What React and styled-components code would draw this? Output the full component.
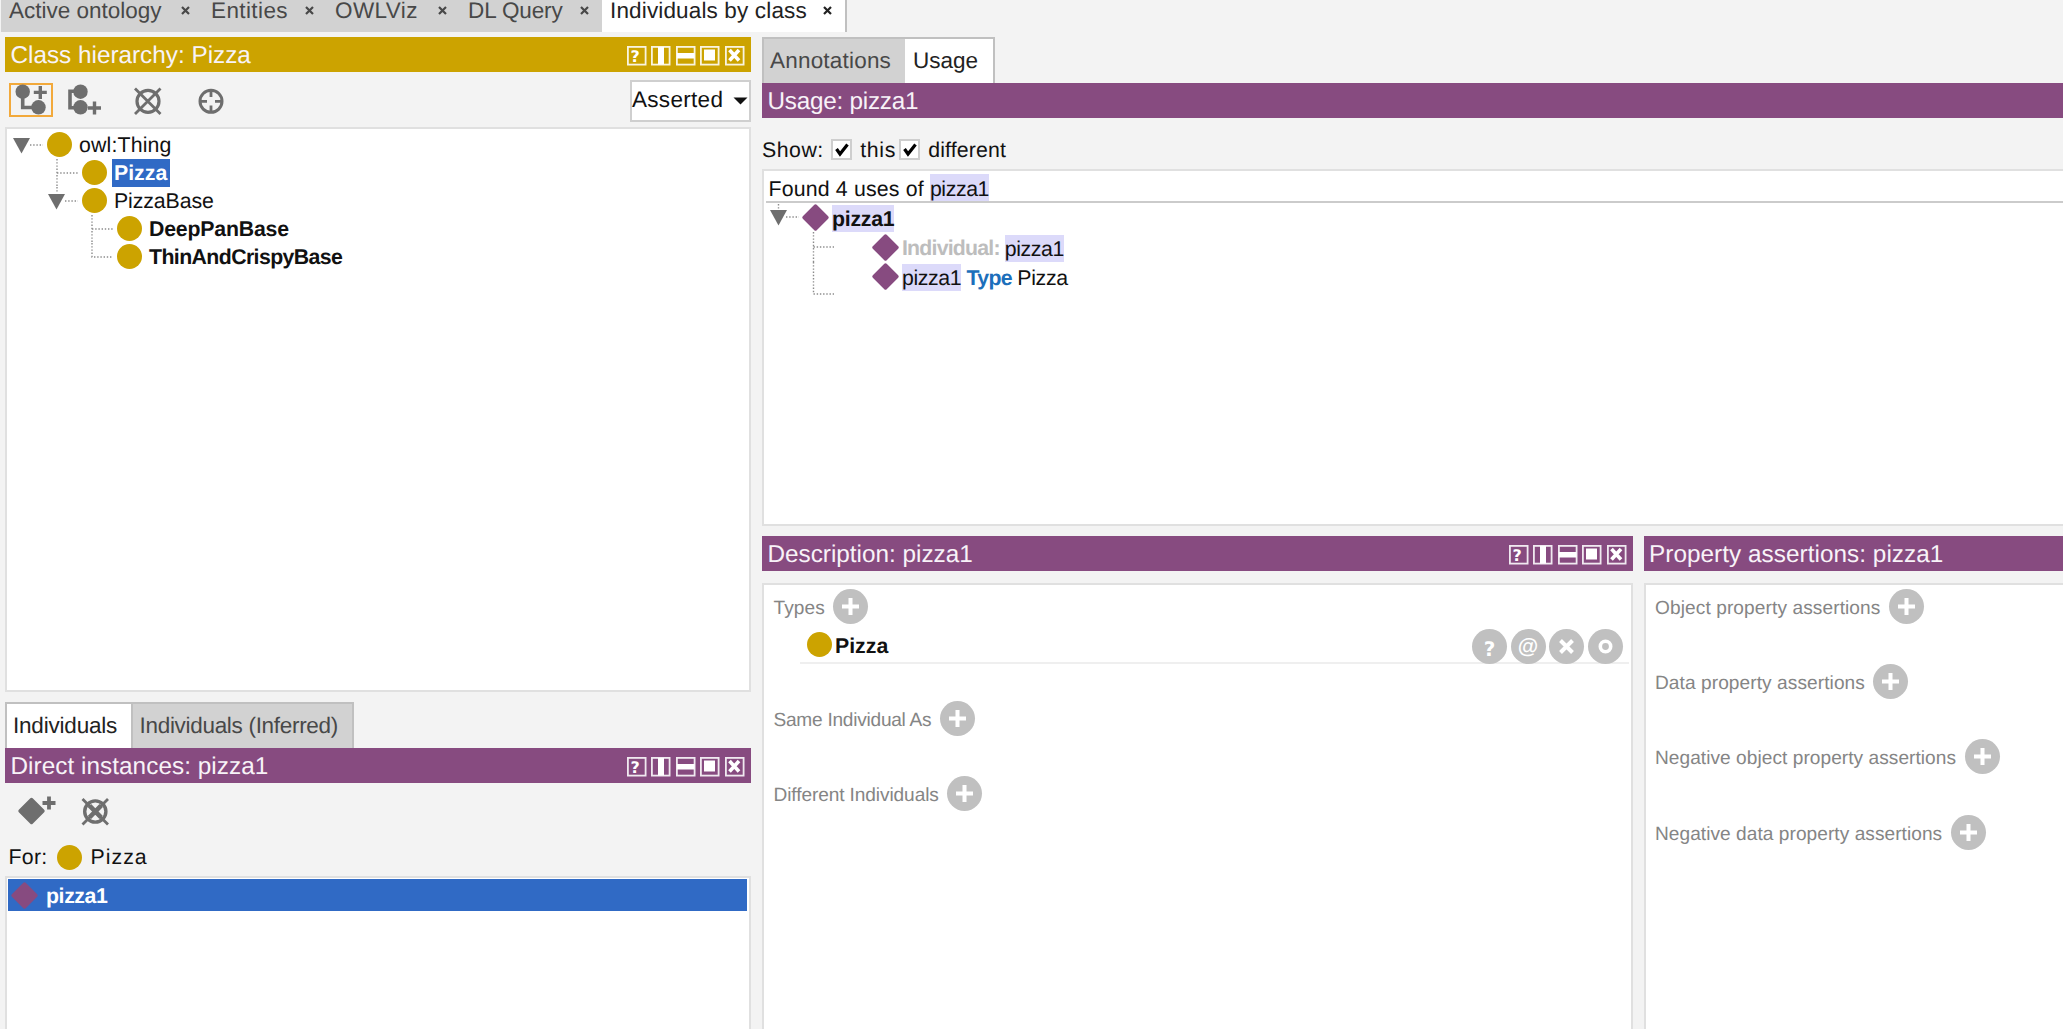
import React from "react";
import styled, { createGlobalStyle } from "styled-components";

const GOLD = "#cca300";
const PURPLE = "#874b80";
const ICON = "#6e6e6e";

const GlobalStyle = createGlobalStyle`
  * { box-sizing: border-box; }
  body {
    margin: 0;
    background: #f3f3f3;
    overflow: hidden;
  }
`;

const Page = styled.div`
  width: 100vw;
  height: 100vh;
  overflow: hidden;
  display: flex;
  flex-direction: column;
  background: #f3f3f3;
  color: #111;
  font-family: "Liberation Sans", Arial, sans-serif;
  font-size: 21.3px;
  text-rendering: geometricPrecision;
  white-space: pre;

  svg {
    display: block;
    flex: none;
    overflow: visible;
  }
`;

const Text = styled.span`
  letter-spacing: ${(p) => p.$ls || 0}px;
  font-weight: ${(p) => (p.$bold ? "bold" : "normal")};
  color: ${(p) => p.$color || "inherit"};
`;

const TopTabs = styled.div`
  display: flex;
  height: 32px;
  flex: none;
  padding-left: 1px;
`;

const TopTab = styled.div`
  width: ${(p) => p.$w}px;
  display: flex;
  justify-content: space-between;
  padding: 0 13px 0 8px;
  background: ${(p) => (p.$active ? "#fff" : "#d2d2d2")};
  color: ${(p) => (p.$active ? "#222" : "#484848")};
  border-right: ${(p) => (p.$active ? "2px solid #c0c0c0" : "none")};
  font-size: 22.5px;
  line-height: 21px;

  svg {
    margin-top: 6px;
  }
`;

const Columns = styled.div`
  display: flex;
  flex: 1;
  gap: 11px;
  padding: 5px 0 0 5px;
  min-height: 0;
`;

const LeftColumn = styled.div`
  width: 746px;
  flex: none;
  display: flex;
  flex-direction: column;
`;

const RightColumn = styled.div`
  flex: 1;
  min-width: 0;
  display: flex;
  flex-direction: column;
`;

const TitleBar = styled.div`
  height: 35px;
  flex: none;
  display: flex;
  align-items: center;
  justify-content: space-between;
  padding: 2px 7px 0 5.5px;
  background: ${(p) => p.$bg || PURPLE};
  color: #f8f3f8;
  font-size: 24.3px;
`;

const HeaderButtons = styled.div`
  display: flex;
  gap: 5px;
  margin-top: 1px;
`;

const Toolbar = styled.div`
  height: 55px;
  flex: none;
  display: flex;
  align-items: flex-start;
  padding: 8px 0 0 4px;
`;

const ToolButton = styled.div`
  width: ${(p) => p.$w}px;
  height: 34px;
  margin: 3px ${(p) => p.$gap || 0}px 0 0;
  border: 2px solid ${(p) => (p.$focus ? "#f2a93b" : "transparent")};
`;

const Combo = styled.div`
  width: 121px;
  height: 42px;
  margin-left: auto;
  padding: 0 1px 2px 0;
  display: flex;
  align-items: center;
  justify-content: space-between;
  background: #fff;
  border: 2px solid #cfcfcf;
  font-size: 22.5px;
`;

const Box = styled.div`
  background: #fff;
  border: 2px solid #e0e0e0;
  flex: ${(p) => (p.$h ? "none" : 1)};
  height: ${(p) => (p.$h ? p.$h + "px" : "auto")};
  padding-top: ${(p) => p.$top || 0}px;
  margin-right: ${(p) => p.$mr || 0}px;
  margin-bottom: ${(p) => (p.$h ? 0 : -4)}px;
`;

const TreeRow = styled.div`
  height: 28px;
  display: flex;
  align-items: center;
`;

const TreeLabel = styled.div`
  height: 28px;
  line-height: 29px;
  margin-left: 5px;
  padding: 0 3px 0 2px;
  background: ${(p) => (p.$selected ? "#306ac5" : "none")};
  color: ${(p) => (p.$selected ? "#fff" : "inherit")};
`;

const Dot = styled.div`
  width: 25px;
  height: 25px;
  flex: none;
  margin-bottom: 1px;
  border-radius: 50%;
  background: ${GOLD};
`;

const SubTabs = styled.div`
  display: flex;
  flex: none;
  height: 46px;
  margin-top: ${(p) => p.$mt || 0}px;
`;

const SubTab = styled.div`
  width: ${(p) => p.$w}px;
  padding-left: ${(p) => p.$pl}px;
  line-height: 44px;
  font-size: 22.5px;
  background: ${(p) => (p.$active ? "#fff" : "#d2d2d2")};
  color: ${(p) => (p.$active ? "#222" : "#484848")};
  border: solid #c0c0c0;
  border-width: 2px ${(p) => (p.$last ? 2 : 0)}px 0 ${(p) => p.$left || 0}px;
`;

const ForRow = styled.div`
  height: 38px;
  flex: none;
  display: flex;
  align-items: center;
  gap: 9px;
  padding: 1px 0 0 3.5px;
`;

const InstanceRow = styled.div`
  height: 32px;
  margin: 0 2px 0 1px;
  display: flex;
  align-items: center;
  gap: 8px;
  padding-left: 3px;
  background: #306ac5;
  color: #fff;

  span {
    padding-top: 2px;
  }
`;

const ShowRow = styled.div`
  height: 51px;
  flex: none;
  display: flex;
  align-items: center;
  padding-top: 12px;

  span {
    padding-top: 2px;
  }
`;

const Check = styled.div`
  width: 21px;
  height: 21px;
  margin: 0 ${(p) => p.$mr}px 0 ${(p) => p.$ml}px;
  border: 2px solid #cecece;
  background: #fff;
`;

const Found = styled.div`
  height: 32px;
  margin-left: 2px;
  padding: 3px 0 0 2.5px;
  line-height: 31px;
  border-bottom: 2px solid #cbcbcb;
`;

const Mark = styled.span`
  display: inline-block;
  height: 27px;
  line-height: ${(p) => (p.$found ? 30 : 28)}px;
  background: #dcdafa;
  vertical-align: top;
`;

const UsageRow = styled.div`
  height: 29.7px;
  display: flex;
  align-items: center;
  line-height: 28px;
  padding-top: 1px;

  svg.diamond {
    margin: 0 3px 2px 0;
  }
`;

const LowerPanels = styled.div`
  display: flex;
  flex: 1;
  gap: 10.5px;
  margin-top: 10px;
`;

const Panel = styled.div`
  width: ${(p) => (p.$w ? p.$w + "px" : "auto")};
  flex: ${(p) => (p.$w ? "none" : 1)};
  display: flex;
  flex-direction: column;
  gap: 12px;
`;

const Section = styled.div`
  height: ${(p) => p.$h || 75.2}px;
  padding-left: 9.5px;
`;

const SectionHead = styled.div`
  height: 35px;
  display: flex;
  align-items: center;
  gap: 8.5px;
  font-size: 19.1px;
  color: #858585;

  span {
    padding-top: 5px;
  }
`;

const TypeRow = styled.div`
  height: 36px;
  margin: 4px 2px 0 26.5px;
  padding-left: 6.5px;
  display: flex;
  align-items: center;
  border-bottom: 2px solid #efefef;
`;

const TypeName = styled.div`
  margin: 0 auto 0 3.5px;
  padding-top: 2px;
  font-weight: bold;
`;

const RoundButtons = styled.div`
  display: flex;
  gap: 3.6px;
  margin: 2px 6.3px 0 0;
`;

const Close = () => (
  <svg width="9" height="9" viewBox="0 0 9 9">
    <path d="M1 1L8 8M8 1L1 8" stroke="currentColor" strokeWidth="2.2" />
  </svg>
);

const Plus = ({ x, y, r = 6.5, w = 3.4 }) => (
  <path
    d={`M${x - r} ${y}H${x + r}M${x} ${y - r}V${y + r}`}
    stroke={ICON}
    strokeWidth={w}
    fill="none"
  />
);

const glyphs = {
  help: (
    <text x="8.2" y="15.5" fontSize="16" fontWeight="bold" fill="#fff" textAnchor="middle" fontFamily="DejaVu Sans">
      ?
    </text>
  ),
  cols: <rect x="7" y="1" width="6" height="17.5" fill="#fff" />,
  rows: <rect x="1" y="7" width="17.5" height="5.5" fill="#fff" />,
  full: <rect x="4" y="3.5" width="11" height="11" fill="#fff" />,
  close: <path d="M4.5 4L14 14.5M14 4L4.5 14.5" stroke="#fff" strokeWidth="3.6" />,
};

const ViewButtons = () => (
  <HeaderButtons>
    {Object.keys(glyphs).map((name) => (
      <svg key={name} width="19.5" height="19.5" viewBox="0 0 19.5 19.5">
        <rect x="0.9" y="0.9" width="17.7" height="17.7" fill="none" stroke="#fff" strokeOpacity="0.88" strokeWidth="1.8" />
        {glyphs[name]}
      </svg>
    ))}
  </HeaderButtons>
);

const Diamond = () => (
  <svg className="diamond" width="27" height="27" viewBox="0 0 27 27">
    <path d="M13.5 2L25 13.5L13.5 25L2 13.5Z" fill={PURPLE} stroke={PURPLE} strokeWidth="3.4" strokeLinejoin="round" />
  </svg>
);

// dotted guide lines and expander in front of a tree row
const Gutter = ({ w, lines, arrow }) => (
  <svg width={w} height="28">
    <path d={lines} stroke="#8c8c8c" strokeWidth="1.4" strokeDasharray="1.4 1.8" fill="none" />
    {arrow && <path d={`M${arrow[0]} ${arrow[1]}h17l-8.5 15.5z`} fill={ICON} />}
  </svg>
);

const signs = {
  plus: <path d="M9 17.5H26M17.5 9V26" stroke="#fff" strokeWidth="4" />,
  help: (
    <text x="17.5" y="27" fontSize="20" fontWeight="bold" fill="#fff" textAnchor="middle" fontFamily="DejaVu Sans">
      ?
    </text>
  ),
  at: (
    <text x="17" y="24" fontSize="21" fontWeight="bold" fill="#fff" textAnchor="middle">
      @
    </text>
  ),
  cross: <path d="M11.5 11.5L23.5 23.5M23.5 11.5L11.5 23.5" stroke="#fff" strokeWidth="4" />,
  ring: <circle cx="17.5" cy="17.5" r="5.2" stroke="#fff" strokeWidth="3.6" fill="none" />,
};

const RoundIcon = ({ sign }) => (
  <svg width="35" height="35" viewBox="0 0 35 35">
    <circle cx="17.5" cy="17.5" r="17.5" fill="#c0c0c0" />
    {signs[sign]}
  </svg>
);

const Tick = () => (
  <svg width="17" height="17" viewBox="0 0 17 17">
    <path d="M3.5 8L7 13L14.5 3.5" stroke="#000" strokeWidth="3.2" fill="none" />
  </svg>
);

const topTabs = [
  { label: "Active ontology", w: 202, ls: 0 },
  { label: "Entities", w: 124, ls: 0.4 },
  { label: "OWLViz", w: 133, ls: 0.4 },
  { label: "DL Query", w: 142, ls: -0.1 },
  { label: "Individuals by class", w: 245, ls: 0.15, active: true },
];

const treeRows = [
  { label: "owl:Thing", w: 40, ls: 0.15, lines: "M23 14H36", arrow: [6, 7] },
  { label: "Pizza", w: 75, bold: true, selected: true, lines: "M50 0V28M50 14H71" },
  { label: "PizzaBase", w: 75, ls: -0.1, lines: "M50 0V6M58 14H71", arrow: [41, 7] },
  { label: "DeepPanBase", w: 110, ls: -0.2, bold: true, lines: "M85 0V28M85 14H106" },
  { label: "ThinAndCrispyBase", w: 110, ls: -0.6, bold: true, lines: "M85 0V14H106" },
];

const assertions = [
  { label: "Object property assertions", ls: 0.1 },
  { label: "Data property assertions", ls: 0.08 },
  { label: "Negative object property assertions", ls: 0.05 },
  { label: "Negative data property assertions", ls: 0.05 },
];

const Head = ({ label, ls }) => (
  <SectionHead>
    <Text $ls={ls}>{label}</Text>
    <RoundIcon sign="plus" />
  </SectionHead>
);

const ClassHierarchy = () => (
  <>
    <TitleBar $bg={GOLD}>
      <Text>Class hierarchy: Pizza</Text>
      <ViewButtons />
    </TitleBar>
    <Toolbar>
      <ToolButton $w={44} $gap={13} $focus>
        <svg width="40" height="30" viewBox="11 85 40 30">
          <circle cx="22.7" cy="91.7" r="7.2" fill={ICON} />
          <circle cx="38.5" cy="107.3" r="7.2" fill={ICON} />
          <path d="M22.7 92V107.5H38" stroke={ICON} strokeWidth="3.6" fill="none" />
          <Plus x={40.3} y={92.4} />
        </svg>
      </ToolButton>
      <ToolButton $w={40} $gap={27}>
        <svg width="36" height="30" viewBox="68 85 36 30">
          <circle cx="80.5" cy="91.7" r="7.2" fill={ICON} />
          <circle cx="80.5" cy="107.3" r="7.2" fill={ICON} />
          <path d="M80 91.2H70V107.7H80" stroke={ICON} strokeWidth="3.6" fill="none" />
          <Plus x={94.5} y={108} />
        </svg>
      </ToolButton>
      <ToolButton $w={34} $gap={29}>
        <svg width="30" height="30" viewBox="135 85 30 30">
          <circle cx="148" cy="101.3" r="11" stroke={ICON} strokeWidth="3.2" fill="none" />
          <path d="M135 88.5L160.5 114M160.5 88.5L135 114" stroke={ICON} strokeWidth="2.8" />
        </svg>
      </ToolButton>
      <ToolButton $w={34}>
        <svg width="30" height="30" viewBox="198 85 30 30">
          <circle cx="211" cy="101.3" r="11" stroke={ICON} strokeWidth="3" fill="none" />
          <path d="M211 90V97M211 105.5V112.5M200 101.3H207M215 101.3H222" stroke={ICON} strokeWidth="2.8" />
        </svg>
      </ToolButton>
      <Combo>
        <Text $ls={0.3}>Asserted</Text>
        <svg width="15" height="9">
          <path d="M0.5 1.5H14.5L7.5 8.5Z" fill="#111" />
        </svg>
      </Combo>
    </Toolbar>
    <Box $h={565} $top={2}>
      {treeRows.map((r) => (
        <TreeRow key={r.label}>
          <Gutter w={r.w} lines={r.lines} arrow={r.arrow} />
          <Dot />
          <TreeLabel $selected={r.selected}>
            <Text $bold={r.bold} $ls={r.ls}>{r.label}</Text>
          </TreeLabel>
        </TreeRow>
      ))}
    </Box>
  </>
);

const Instances = () => (
  <>
    <SubTabs $mt={10}>
      <SubTab $w={126} $pl={6} $left={2} $active>
        <Text $ls={-0.2}>Individuals</Text>
      </SubTab>
      <SubTab $w={223} $pl={6.5} $left={2} $last>
        <Text $ls={-0.3}>Individuals (Inferred)</Text>
      </SubTab>
    </SubTabs>
    <TitleBar>
      <Text $ls={0.05}>Direct instances: pizza1</Text>
      <ViewButtons />
    </TitleBar>
    <Toolbar>
      <ToolButton $w={44} $gap={26}>
        <svg width="40" height="30" viewBox="11 796 40 30">
          <path d="M31.5 799.5L43 811L31.5 822.5L20 811Z" fill={ICON} stroke={ICON} strokeWidth="3.4" strokeLinejoin="round" />
          <Plus x={49} y={803} w={3.8} />
        </svg>
      </ToolButton>
      <ToolButton $w={34}>
        <svg width="30" height="30" viewBox="81 796 30 30">
          <circle cx="95.3" cy="811.5" r="10.6" stroke={ICON} strokeWidth="3.4" fill="none" />
          <path d="M82.5 799L108 824.5M108 799L82.5 824.5" stroke={ICON} strokeWidth="2.8" />
          <path d="M95.3 803.5L103.3 811.5L95.3 819.5L87.3 811.5Z" stroke="none" fill="none" />
          <path d="M89.5 805.7L101.1 817.3M101.1 805.7L89.5 817.3" stroke={ICON} strokeWidth="4.6" />
        </svg>
      </ToolButton>
    </Toolbar>
    <ForRow>
      <Text $ls={0.3}>For:</Text>
      <Dot />
      <Text $ls={1}>Pizza</Text>
    </ForRow>
    <Box $top={1}>
      <InstanceRow>
        <Diamond />
        <Text $bold $ls={-0.4}>pizza1</Text>
      </InstanceRow>
    </Box>
  </>
);

const Usage = () => (
  <>
    <SubTabs>
      <SubTab $w={143} $pl={6} $left={2}>
        <Text $ls={0.2}>Annotations</Text>
      </SubTab>
      <SubTab $w={90} $pl={8} $active $last>
        <Text>Usage</Text>
      </SubTab>
    </SubTabs>
    <TitleBar>
      <Text $ls={-0.25}>Usage: pizza1</Text>
    </TitleBar>
    <ShowRow>
      <Text $ls={0.5}>Show:</Text>
      <Check $ml={7.5} $mr={8}><Tick /></Check>
      <Text $ls={0.7}>this</Text>
      <Check $ml={2.5} $mr={8.5}><Tick /></Check>
      <Text $ls={0.15}>different</Text>
    </ShowRow>
    <Box $h={357} $mr={-4}>
      <Found>
        <Text $ls={0.17}>Found 4 uses of </Text>
        <Mark $found><Text $ls={-0.4}>pizza1</Text></Mark>
      </Found>
      <UsageRow>
        <Gutter w={38} lines="M14.5 0V6M22 13H35" arrow={[6, 6]} />
        <Diamond />
        <Mark><Text $bold $ls={-0.25}>pizza1</Text></Mark>
      </UsageRow>
      <UsageRow>
        <Gutter w={108} lines="M49.5 -2V28M49.5 13H70" />
        <Diamond />
        <Text $bold $ls={-0.8} $color="#bdbdbd">Individual: </Text>
        <Mark><Text $ls={-0.4}>pizza1</Text></Mark>
      </UsageRow>
      <UsageRow>
        <Gutter w={108} lines="M49.5 -2V30H70" />
        <Diamond />
        <Mark><Text $ls={-0.4}>pizza1</Text></Mark>
        <Text $bold $ls={-0.65} $color="#1c6fbb"> Type </Text>
        <Text $ls={-0.3}>Pizza</Text>
      </UsageRow>
    </Box>
  </>
);

const Description = () => (
  <Panel $w={871}>
    <TitleBar>
      <Text>Description: pizza1</Text>
      <ViewButtons />
    </TitleBar>
    <Box $top={4}>
      <Section $h={112}>
        <Head label="Types" ls={0.1} />
        <TypeRow>
          <Dot />
          <TypeName>Pizza</TypeName>
          <RoundButtons>
            {["help", "at", "cross", "ring"].map((s) => (
              <RoundIcon key={s} sign={s} />
            ))}
          </RoundButtons>
        </TypeRow>
      </Section>
      <Section>
        <Head label="Same Individual As" ls={-0.25} />
      </Section>
      <Section>
        <Head label="Different Individuals" ls={-0.1} />
      </Section>
    </Box>
  </Panel>
);

const PropertyAssertions = () => (
  <Panel>
    <TitleBar>
      <Text $ls={0.05}>Property assertions: pizza1</Text>
    </TitleBar>
    <Box $top={4} $mr={-4}>
      {assertions.map((a) => (
        <Section key={a.label}>
          <Head label={a.label} ls={a.ls} />
        </Section>
      ))}
    </Box>
  </Panel>
);

export default function App() {
  return (
    <Page>
      <GlobalStyle />
      <TopTabs>
        {topTabs.map((t) => (
          <TopTab key={t.label} $w={t.w} $active={t.active}>
            <Text $ls={t.ls}>{t.label}</Text>
            <Close />
          </TopTab>
        ))}
      </TopTabs>
      <Columns>
        <LeftColumn>
          <ClassHierarchy />
          <Instances />
        </LeftColumn>
        <RightColumn>
          <Usage />
          <LowerPanels>
            <Description />
            <PropertyAssertions />
          </LowerPanels>
        </RightColumn>
      </Columns>
    </Page>
  );
}
